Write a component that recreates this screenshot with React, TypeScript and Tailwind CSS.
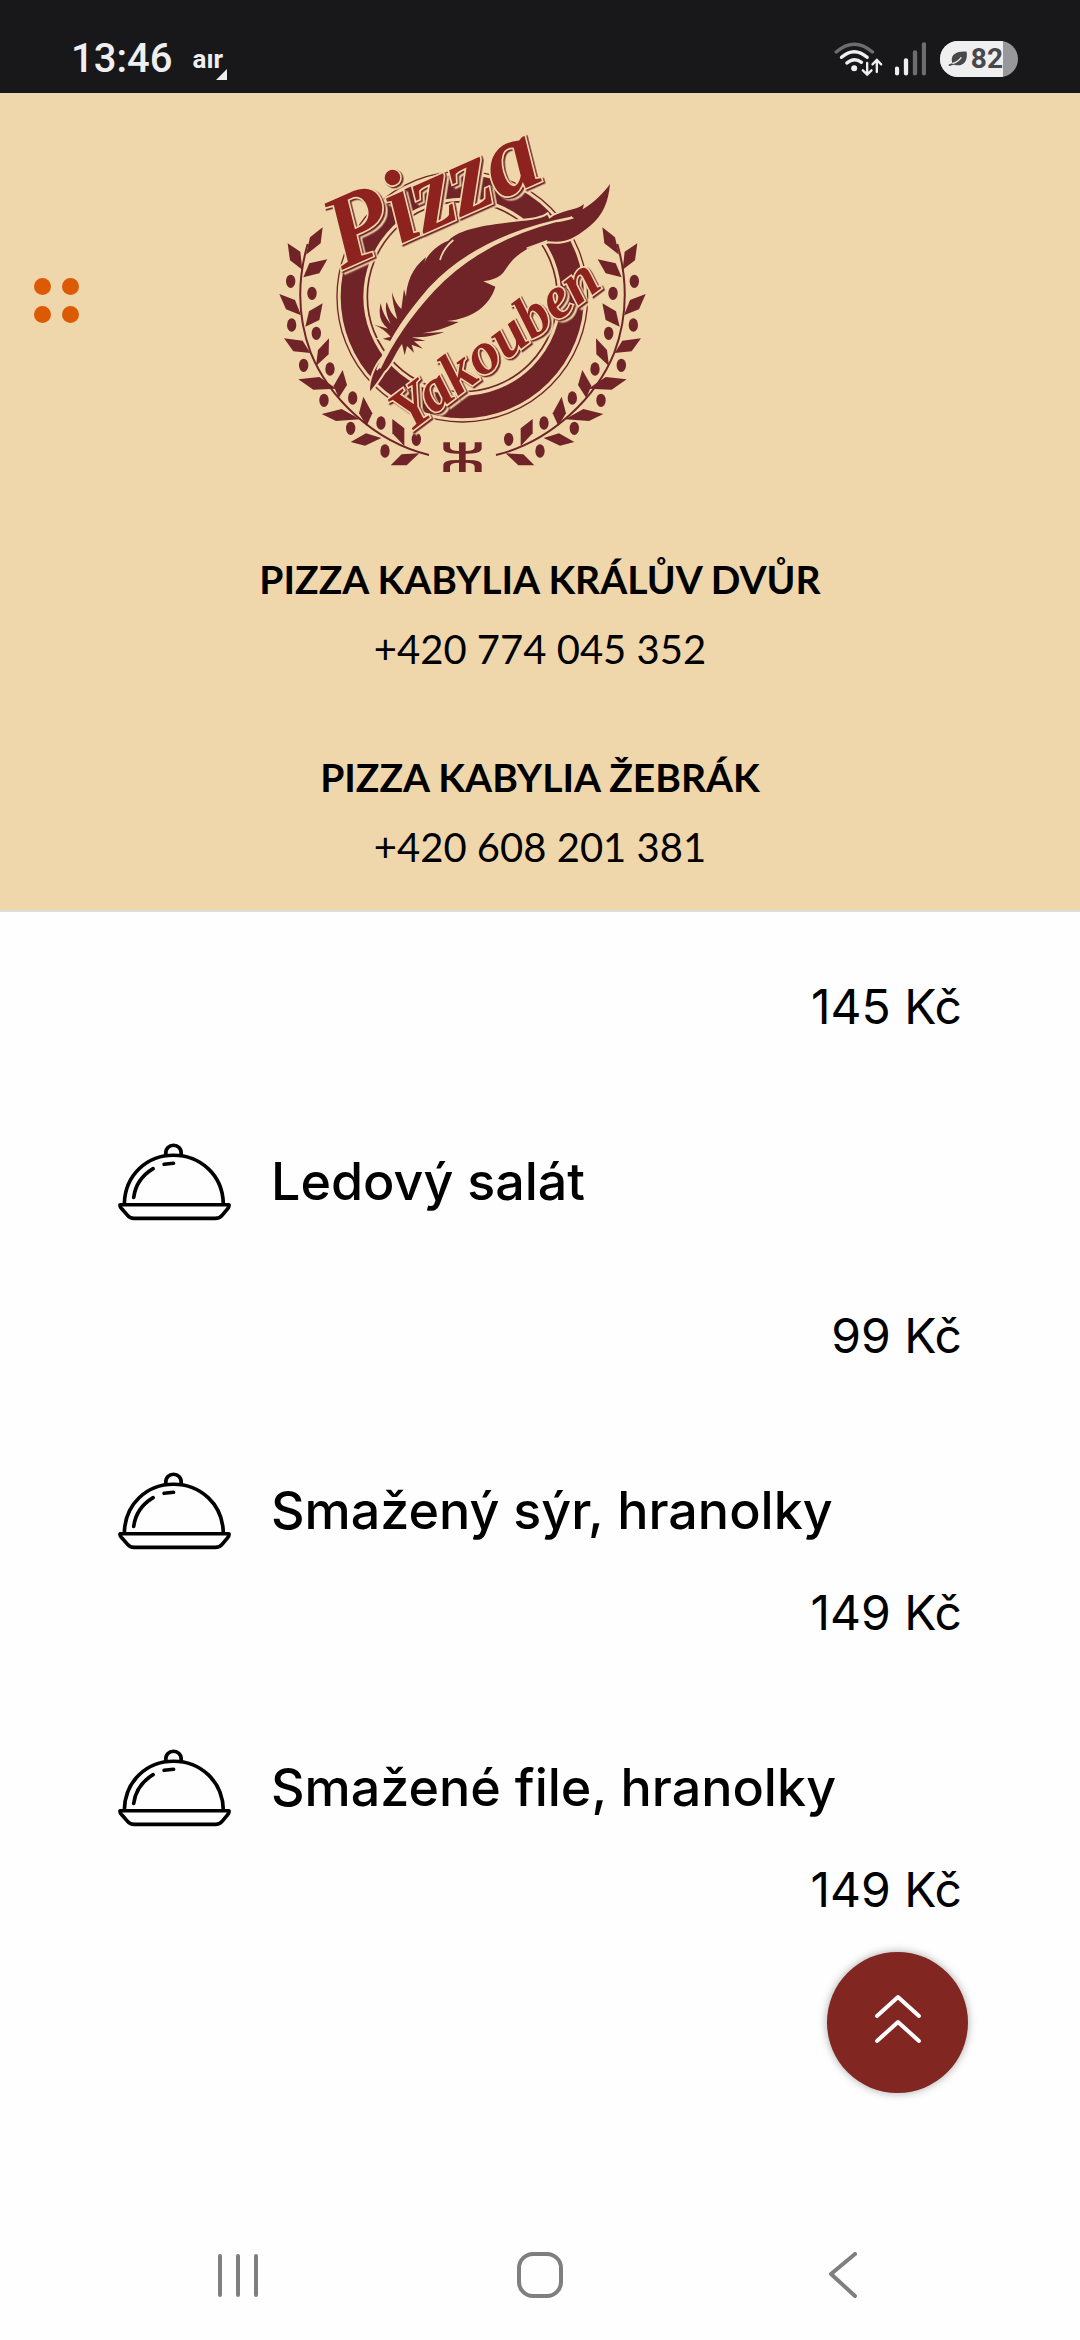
const branches = [
    { title: "PIZZA KABYLIA KRÁLŮV DVŮR", phone: "+420 774 045 352" },
    { title: "PIZZA KABYLIA ŽEBRÁK", phone: "+420 608 201 381" },
]

const dishes = [
    { title: "Ledový salát", price: "99 Kč", spaced: true },
    { title: "Smažený sýr, hranolky", price: "149 Kč", spaced: false },
    { title: "Smažené file, hranolky", price: "149 Kč", spaced: false },
]

const leaves = [
    "188,322 150,352 138,404 182,370",
    "83,370 121,395 127,449 90,421",
    "202,418 148,430 130,472 178,460",
    "58,522 105,540 123,586 78,568",
    "188,550 147,574 136,620 178,600",
    "72,655 128,662 151,699 100,694",
    "207,655 174,690 168,738 206,703",
    "115,778 178,771 230,806 160,809",
    "248,750 221,797 236,834 261,795",
    "185,882 245,867 300,898 228,903",
    "310,830 297,880 320,918 337,880",
    "272,966 318,940 364,954 315,977",
    "397,897 397,940 433,978 433,925",
    "392,1036 425,1003 478,1000 440,1036",
]

const olives = [
    [92, 484], [156, 520], [95, 615], [169, 640], [131, 736], [210, 747],
    [192, 841], [278, 834], [272, 925], [363, 909], [375, 993], [469, 958],
]

function Branch() {
    return (
        <g fill="#702427">
            <path
                d="M143 372C112 480 112 590 152 698C205 830 340 965 507 1005"
                fill="none"
                stroke="#702427"
                strokeWidth="6"
            />
            {leaves.map((points) => (
                <polygon key={points} points={points} />
            ))}
            {olives.map(([x, y]) => (
                <ellipse key={`${x}-${y}`} cx={x} cy={y} rx="14" ry="20" />
            ))}
        </g>
    )
}

function Logo() {
    return (
        <svg viewBox="0 -30 1200 1140" className="h-[380px] w-[400px] overflow-visible" role="img" aria-label="Pizza Yakouben">
            <g fill="none" stroke="#702427">
                <circle cx="607" cy="530" r="376" strokeWidth="4" />
                <circle cx="607" cy="530" r="331" strokeWidth="68" />
                <circle cx="607" cy="530" r="285" strokeWidth="5" />
            </g>
            <Branch />
            <g transform="translate(1215 0) scale(-1 1)">
                <Branch />
            </g>
            <g fill="#702427">
                <rect x="597" y="967" width="20" height="89" />
                <path d="M550 967h20v14q0 12 27 12h20q27 0 27-12v-14h21v18q0 16-40 16h-35q-40 0-40-16z" />
                <path d="M550 1056h20v-16q0-12 27-12h20q27 0 27 12v16h21v-20q0-16-40-16h-35q-40 0-40 16z" />
            </g>
            <path
                d="M1050 192C1045 245 1030 285 990 318C955 345 925 372 865 364C810 378 770 400 742 440C728 460 724 475 670 484L706 500C690 555 640 596 560 603L596 606C550 628 520 634 488 640L553 636C510 652 480 652 455 652L497 662L462 664L489 686L455 674L462 698L441 678L434 706L426 672C405 700 395 735 372 755C360 775 345 795 330 814C330 780 345 740 370 712C378 698 385 680 394 664L368 656L392 650Q370 625 342 614L384 626Q350 600 362 550Q368 585 392 612Q372 570 380 545Q390 580 412 598Q396 545 396 517Q405 550 424 567L432 508L438 530C440 490 455 445 498 411L492 432C500 405 530 375 565 362C600 325 680 316 740 308C800 300 840 300 862 284L868 296C900 270 950 272 972 252L968 268C1005 245 1030 220 1050 192Z"
                fill="#702427"
                stroke="#efd7ab"
                strokeWidth="12"
                paintOrder="stroke"
            />
            <path
                d="M936 292C760 330 620 405 520 512C450 588 400 660 360 745C365 720 345 765 354 742C400 640 440 585 508 505C610 395 760 325 936 292Z"
                fill="#efd7ab"
                stroke="#efd7ab"
                strokeWidth="5"
            />
            <path d="M540 420Q550 385 580 360M800 385Q840 370 862 362M890 304Q920 300 940 293" fill="none" stroke="#efd7ab" strokeWidth="5" />
            <g
                fill="#8e221e"
                stroke="#efd7ab"
                strokeWidth="10"
                paintOrder="stroke"
                className="font-['Liberation_Serif'] font-bold italic [filter:drop-shadow(5px_4px_0_#702427)_drop-shadow(6px_4px_0_#efd7ab)]"
            >
                <text x="246" y="450" fontSize="310" transform="rotate(-24 246 450)">Pizza</text>
                <text x="446" y="940" fontSize="180" transform="rotate(-37 446 940)">Yakouben</text>
            </g>
        </svg>
    )
}

function DishIcon() {
    return (
        <svg viewBox="54 73 338 232" className="h-[78px] w-[113px] shrink-0" fill="none" stroke="#000" strokeWidth="11" strokeLinecap="round" strokeLinejoin="round" aria-hidden="true">
            <path d="M73 254C75 168 140 109 220 109S367 168 369 254" />
            <path d="M197 106C194 70 246 70 243 106" />
            <path d="M60 257H386Q387 264 381 270L366 288Q358 298 345 298H102Q90 298 82 288L66 270Q59 264 60 257Z" />
            <path d="M101 235Q108 180 159 149M192 136L220 133" />
        </svg>
    )
}

function StatusBar() {
    return (
        <div className="flex h-[93px] items-center justify-between bg-[#18181a] pt-6 pr-[62px] pl-[71px] text-[#efefef]">
            <div className="flex items-center gap-5">
                <span className="font-[Roboto] text-[40px] leading-none font-medium">13:46</span>
                <div className="relative font-[Roboto] text-[26px] leading-none font-bold">
                    aır
                    <svg viewBox="0 0 11 11" className="absolute -right-1 -bottom-2 size-[11px]" aria-hidden="true">
                        <path d="M11 0V11H0Z" fill="#efefef" />
                    </svg>
                </div>
            </div>
            <div className="flex items-center">
                <svg viewBox="163 62 146 108" className="h-9 w-[49px]" fill="none" strokeWidth="10" strokeLinecap="round" aria-hidden="true">
                    <path d="M169 95Q223 48 278 95" stroke="#6d6d6f" />
                    <path d="M185 111Q223 77 262 111M201 128Q223 109 245 126" stroke="#efefef" />
                    <circle cx="223" cy="144" r="9" fill="#efefef" />
                    <path d="M262 128V162M249 150L262 163L275 150M291 155V120M278 132L291 119L304 132" stroke="#efefef" strokeWidth="7" />
                </svg>
                <svg viewBox="342 62 93 108" className="ml-3 h-9 w-[31px]" strokeWidth="13" strokeLinecap="round" aria-hidden="true">
                    <path d="M348 145V159M375 120V159" stroke="#efefef" />
                    <path d="M402 96V159M429 72V159" stroke="#6d6d6f" />
                </svg>
                <div className="ml-3.5 h-9 w-[78px] overflow-hidden rounded-full bg-[#98989a]">
                    <div className="flex h-9 w-[63px] items-center justify-end bg-[#efefef] text-[#48484c]">
                        <svg viewBox="500 94 57 46" className="mr-1 h-4 w-[19px]" aria-hidden="true">
                            <path d="M556 95C560 125 545 142 518 134L503 138Q500 134 505 132L513 130C505 105 525 92 556 95Z" fill="#48484c" />
                            <path d="M513 131Q530 126 540 112" fill="none" stroke="#efefef" strokeWidth="4" />
                        </svg>
                        <span className="font-[Roboto] text-[28px] leading-none font-bold">82</span>
                    </div>
                </div>
            </div>
        </div>
    )
}

function Price({ children }: { children: string }) {
    return <p className="text-right text-5xl leading-[60px]">{children}</p>
}

export default function App() {
    return (
        <div className="flex min-h-screen flex-col bg-[#fefefe] font-[Inter,sans-serif] text-black">
            <StatusBar />
            <header className="border-b-2 border-[#dddddb] bg-[#efd7ab] pt-[17px] pb-7">
                <div className="flex items-center pl-[34px]">
                    <button type="button" aria-label="Menu" className="grid grid-cols-2 gap-[11px]">
                        <span className="size-[17px] rounded-full bg-[#dc5a04]" />
                        <span className="size-[17px] rounded-full bg-[#dc5a04]" />
                        <span className="size-[17px] rounded-full bg-[#dc5a04]" />
                        <span className="size-[17px] rounded-full bg-[#dc5a04]" />
                    </button>
                    <a href="#" className="ml-[181px]">
                        <Logo />
                    </a>
                </div>
                <div className="mt-[54px] flex flex-col gap-[58px] text-center font-[Lato,sans-serif] leading-[70px]">
                    {branches.map((branch) => (
                        <div key={branch.title}>
                            <h2 className="text-[39px] leading-[70px] font-bold">{branch.title}</h2>
                            <a href="#" className="block text-[40px] leading-[70px]">{branch.phone}</a>
                        </div>
                    ))}
                </div>
            </header>

            <main className="flex flex-1 flex-col gap-[87px] px-[118px] pt-[65px]">
                <Price>145 Kč</Price>
                {dishes.map((dish) => (
                    <article key={dish.title} className={dish.spaced ? "flex flex-col gap-[66px]" : "flex flex-col gap-3.5"}>
                        <div className="flex h-[116px] items-center gap-10">
                            <DishIcon />
                            <h3 className="text-[52px] leading-[60px] font-medium">{dish.title}</h3>
                        </div>
                        <Price>{dish.price}</Price>
                    </article>
                ))}
            </main>

            <button
                type="button"
                aria-label="Back to top"
                className="fixed right-28 bottom-[247px] flex size-[141px] items-center justify-center rounded-full bg-[#822621] pb-3 shadow-[0_0_8px_rgba(0,0,0,0.35)]"
            >
                <svg viewBox="0 0 48 58" className="h-[58px] w-12" fill="none" stroke="#fff" strokeWidth="4" strokeLinecap="round" strokeLinejoin="round">
                    <path d="M3 28L24 9L45 28M3 53L24 34L45 53" />
                </svg>
            </button>

            <nav className="grid h-[130px] grid-cols-3 place-items-center px-[87px]">
                <button type="button" aria-label="Recents" className="flex gap-3.5">
                    <span className="h-[43px] w-1 rounded-full bg-[#7f7f7f]" />
                    <span className="h-[43px] w-1 rounded-full bg-[#7f7f7f]" />
                    <span className="h-[43px] w-1 rounded-full bg-[#7f7f7f]" />
                </button>
                <button type="button" aria-label="Home" className="size-[46px] rounded-2xl border-4 border-[#7f7f7f]" />
                <button type="button" aria-label="Back">
                    <svg viewBox="0 0 29 46" className="h-[46px] w-[29px]" fill="none" stroke="#7f7f7f" strokeWidth="4" strokeLinecap="round" strokeLinejoin="round">
                        <path d="M27 2L3 22L27 44" />
                    </svg>
                </button>
            </nav>
        </div>
    )
}
